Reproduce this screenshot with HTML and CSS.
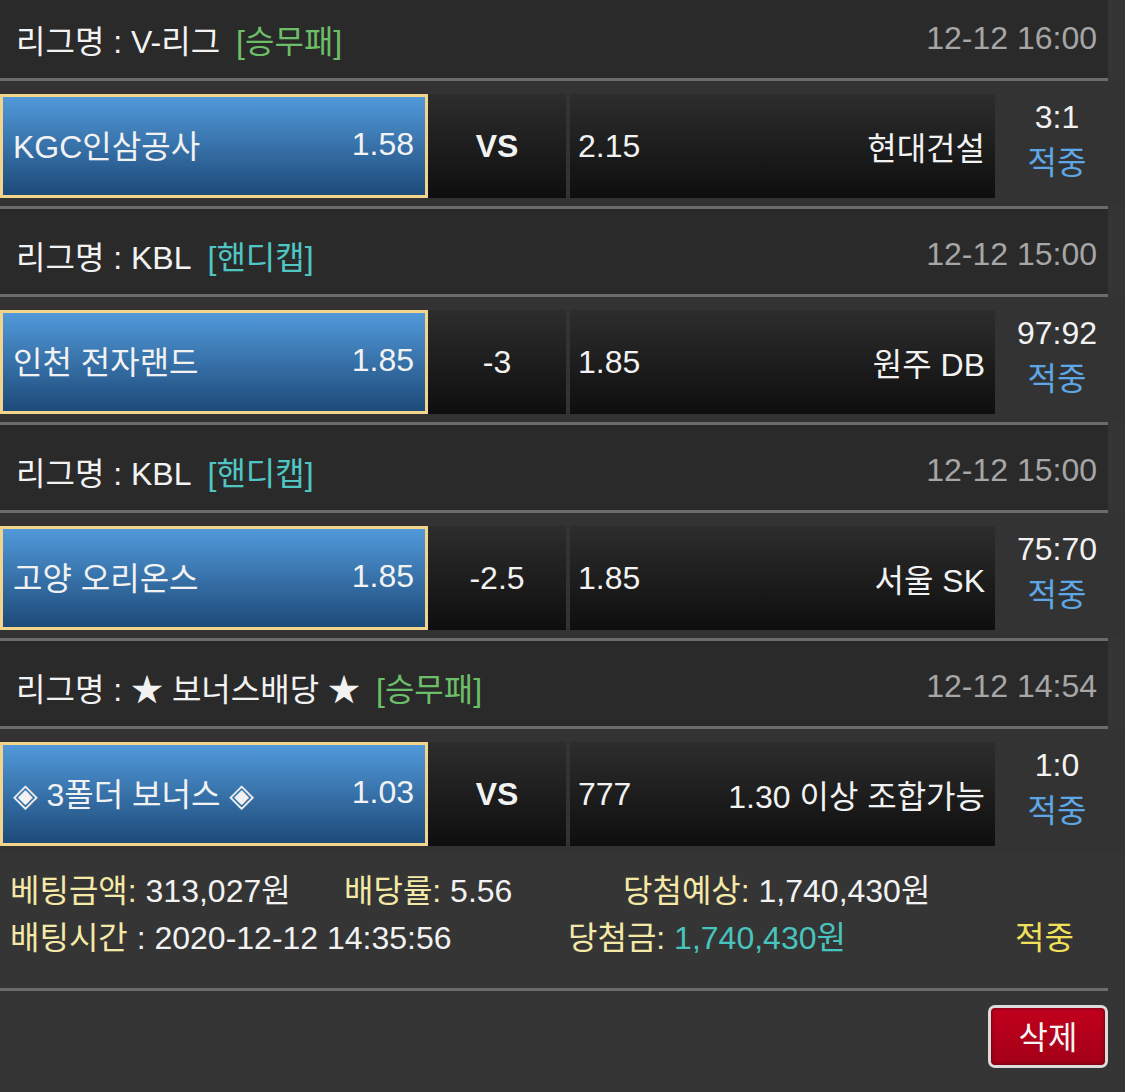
FILE: index.html
```html
<!DOCTYPE html>
<html lang="ko">
<head>
  <meta charset="UTF-8" />
  <meta name="viewport" content="width=device-width, initial-scale=1.0" />
  <title>베팅내역</title>
  <link rel="stylesheet" href="styles.css">
</head>
<body>
  <div class="slip">

    <div class="league">
      <span class="name">리그명 : V-리그</span>
      <span class="tag green">[승무패]</span>
      <span class="time">12-12 16:00</span>
    </div>
    <div class="match">
      <div class="team home"><span>KGC인삼공사</span><span>1.58</span></div>
      <div class="mid vs">VS</div>
      <div class="team away"><span>2.15</span><span>현대건설</span></div>
      <div class="result"><div>3:1</div><div class="hit">적중</div></div>
    </div>

    <div class="league">
      <span class="name">리그명 : KBL</span>
      <span class="tag teal">[핸디캡]</span>
      <span class="time">12-12 15:00</span>
    </div>
    <div class="match">
      <div class="team home"><span>인천 전자랜드</span><span>1.85</span></div>
      <div class="mid">-3</div>
      <div class="team away"><span>1.85</span><span>원주 DB</span></div>
      <div class="result"><div>97:92</div><div class="hit">적중</div></div>
    </div>

    <div class="league">
      <span class="name">리그명 : KBL</span>
      <span class="tag teal">[핸디캡]</span>
      <span class="time">12-12 15:00</span>
    </div>
    <div class="match">
      <div class="team home"><span>고양 오리온스</span><span>1.85</span></div>
      <div class="mid">-2.5</div>
      <div class="team away"><span>1.85</span><span>서울 SK</span></div>
      <div class="result"><div>75:70</div><div class="hit">적중</div></div>
    </div>

    <div class="league">
      <span class="name">리그명 : ★ 보너스배당 ★</span>
      <span class="tag green">[승무패]</span>
      <span class="time">12-12 14:54</span>
    </div>
    <div class="match">
      <div class="team home"><span>◈ 3폴더 보너스 ◈</span><span>1.03</span></div>
      <div class="mid vs">VS</div>
      <div class="team away"><span>777</span><span>1.30 이상 조합가능</span></div>
      <div class="result"><div>1:0</div><div class="hit">적중</div></div>
    </div>

    <div class="summary">
      <div class="row">
        <span class="c1"><span class="lbl">베팅금액:</span> 313,027원</span>
        <span class="c2"><span class="lbl">배당률:</span> 5.56</span>
        <span><span class="lbl">당첨예상:</span> 1,740,430원</span>
      </div>
      <div class="row">
        <span class="c1 wide"><span class="lbl">배팅시간</span> : 2020-12-12 14:35:56</span>
        <span class="c2 wide"><span class="lbl">당첨금:</span> <span class="won">1,740,430원</span></span>
        <span class="state">적중</span>
      </div>
    </div>

    <div class="actions">
      <button class="del-btn">삭제</button>
    </div>

  </div>
</body>
</html>
```

FILE: styles.css
```css
html, body {
  margin: 0;
  padding: 0;
  background-color: #353535;
  font-family: 'Liberation Sans', 'Noto Sans CJK KR', 'DejaVu Sans', sans-serif;
  font-size: 32px;
  color: #f2f2f2;
  overflow: hidden;
}

.slip {
  margin-top: -10px;
}

/* league header */
.league {
  width: 1108px;
  height: 91px;
  box-sizing: border-box;
  display: flex;
  align-items: center;
  padding: 6px 11px 0 16px;
  background-color: #2a2a2a;
  border-top: 3px solid #6c6c6c;
  border-bottom: 3px solid #6c6c6c;
}

.league .tag {
  margin-left: 16px;
}

.tag.green {
  color: #6cbf68;
}

.tag.teal {
  color: #4fc6c4;
}

.league .time {
  margin-left: auto;
  color: #a6a6a6;
}

/* match row */
.match {
  display: flex;
  padding: 13px 0 8px;
  background-color: #333333;
}

.team {
  height: 104px;
  box-sizing: border-box;
  display: flex;
  align-items: center;
  justify-content: space-between;
}

.home {
  width: 428px;
  padding: 0 11px 4px 10px;
  border: 3px solid #f2d48c;
  background: linear-gradient(#5199da, #1d4a78);
}

.mid {
  width: 138px;
  height: 104px;
  margin-right: 4px;
  display: flex;
  align-items: center;
  justify-content: center;
  background: linear-gradient(#2d2d2d, #0e0e0e);
}

.mid.vs {
  font-weight: 700;
}

.away {
  width: 425px;
  padding: 0 10px 0 8px;
  background: linear-gradient(#2d2d2d, #0e0e0e);
}

.result {
  flex: 1;
  margin-top: 0;
  padding-right: 6px;
  text-align: center;
  line-height: 46px;
}

.result .hit {
  color: #5ea6e4;
}

/* totals */
.summary {
  width: 1108px;
  padding: 14px 0 26px 10px;
  box-sizing: border-box;
  border-bottom: 3px solid #6c6c6c;
}

.summary .row {
  display: flex;
  line-height: 47px;
  white-space: nowrap;
}

.summary .c1 {
  width: 334px;
}

.summary .c2 {
  width: 279px;
}

.summary .c1.wide {
  width: 558px;
}

.summary .c2.wide {
  width: 447px;
}

.lbl {
  color: #f4e9a6;
}

.won {
  color: #48c4be;
}

.state {
  color: #f1e05a;
}

.actions {
  width: 1108px;
  display: flex;
  justify-content: flex-end;
  padding-top: 14px;
}

.del-btn {
  width: 120px;
  height: 63px;
  border: 3px solid #dcdcdc;
  border-radius: 7px;
  background: linear-gradient(#c2001d, #a30017);
  box-shadow: inset 0 0 4px rgba(0, 0, 0, 0.5);
  color: #f4f4f4;
  font-family: inherit;
  font-size: 32px;
  padding: 0 0 3px;
  cursor: pointer;
}
```
